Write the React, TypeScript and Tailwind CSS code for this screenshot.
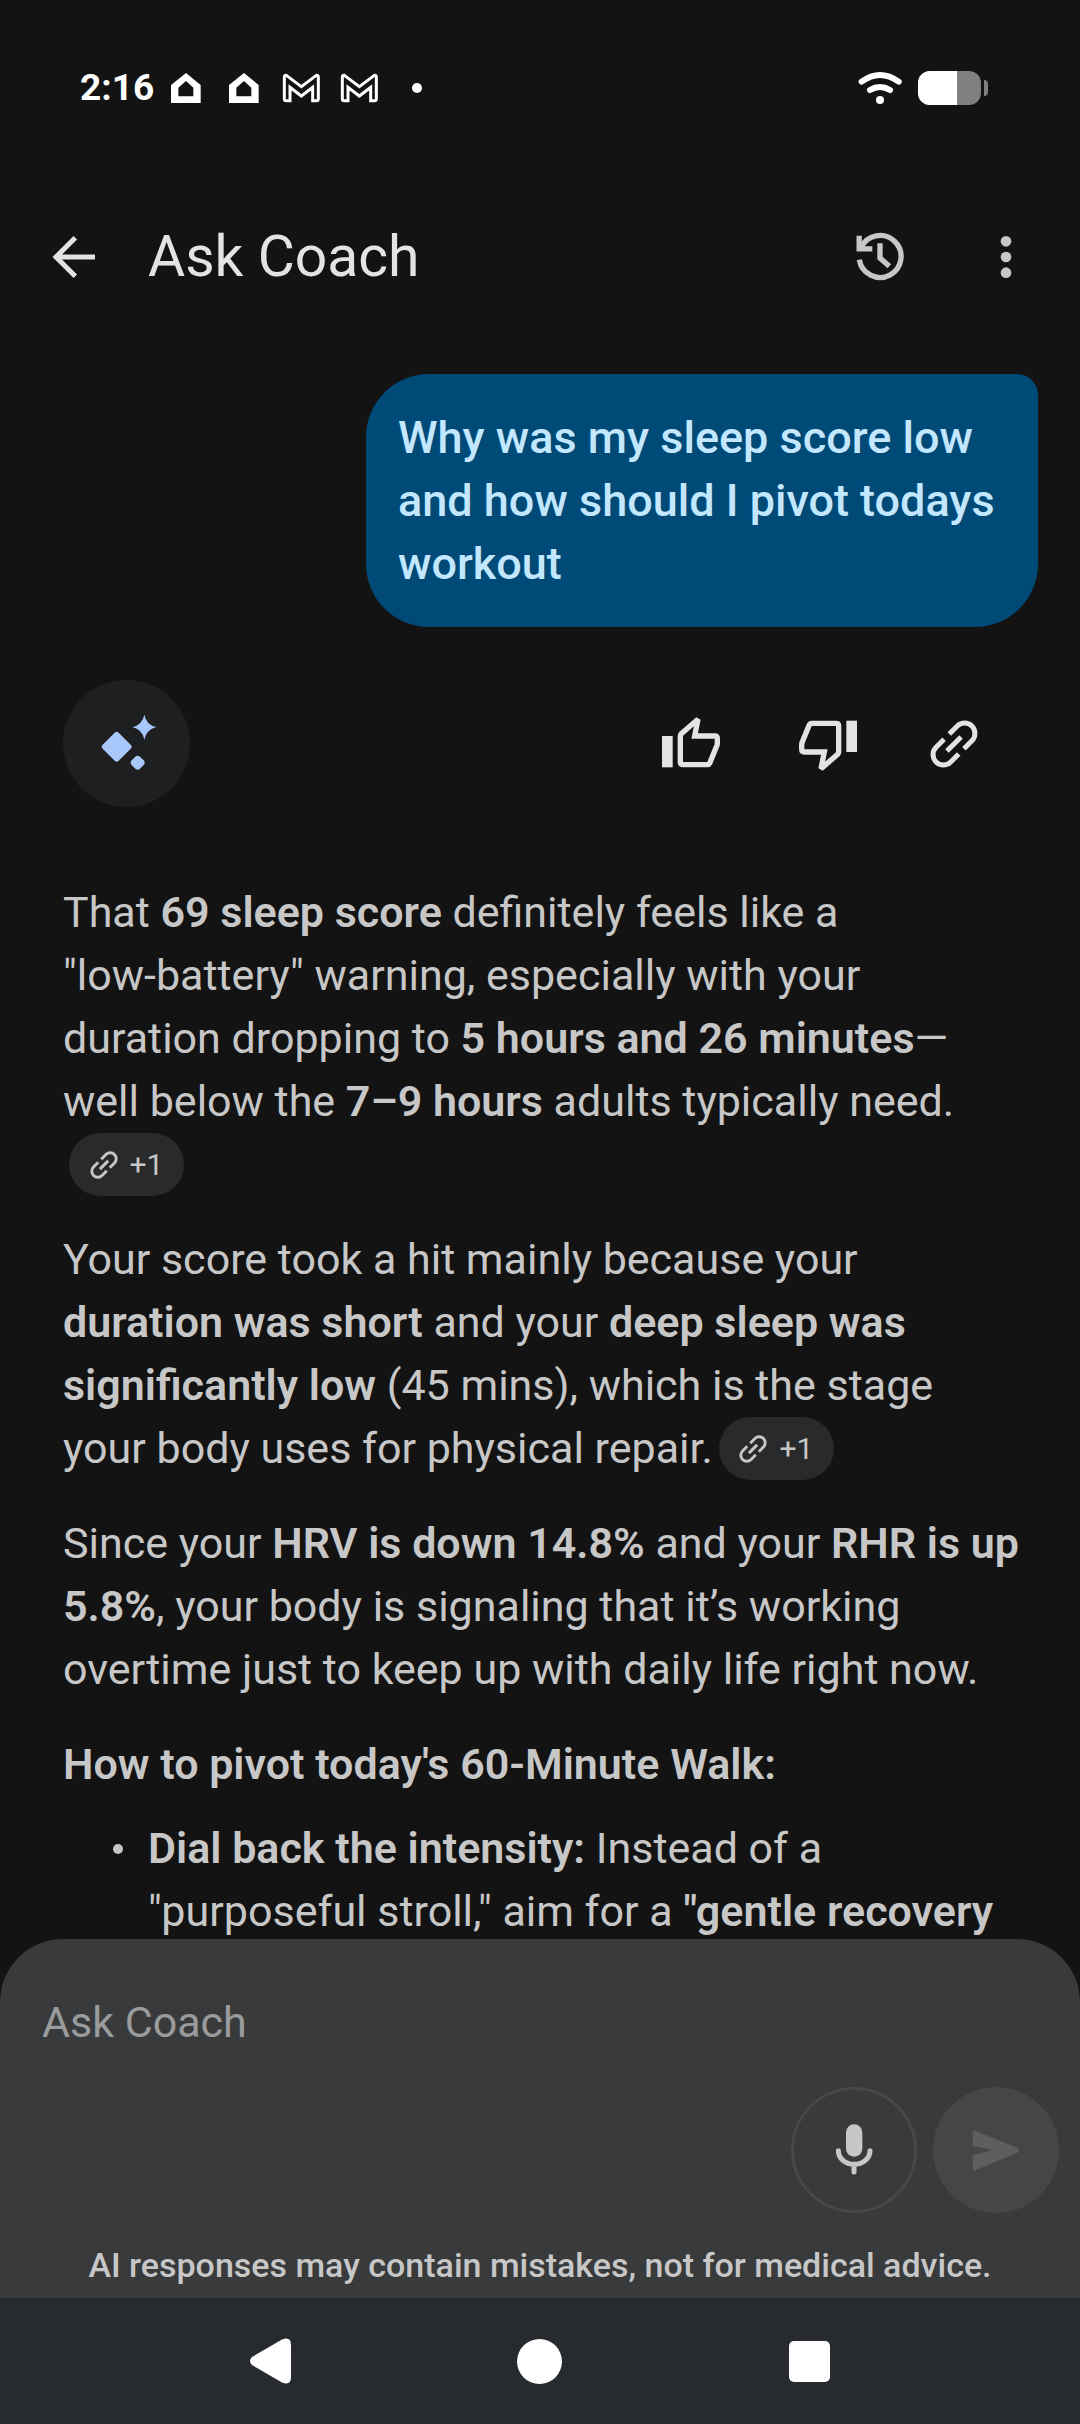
import { useState } from 'react'
import type { ReactNode } from 'react'

function HomeIcon() {
  return (
    <svg viewBox="387 62 96 96" className="h-8 w-8" fill="#fff" aria-hidden="true">
      <path fillRule="evenodd" d="M435 65L479 101V155H390V101ZM435 89L412 109V135H457V109Z" />
    </svg>
  )
}

function MailIcon() {
  return (
    <svg viewBox="725 60 114 108" className="h-9 w-[38px]" fill="none" stroke="#fff" strokeWidth="9" aria-hidden="true">
      <path d="M732 81Q732 75 738 76L783 110L828 76Q834 75 834 81V146Q834 152 828 152H817V112L783 138L749 112V152H738Q732 152 732 146Z" />
    </svg>
  )
}

function WifiIcon() {
  return (
    <svg viewBox="115 60 135 108" className="h-9 w-[45px]" fill="none" stroke="#fff" strokeWidth="18" strokeLinecap="round" aria-hidden="true">
      <path d="M126 95Q181 55 237 95M151 120Q181 102 211 120" />
      <circle cx="181" cy="150" r="12" fill="#fff" stroke="none" />
    </svg>
  )
}

function BackIcon() {
  return (
    <svg viewBox="39 77 192 192" className="h-16 w-16" fill="none" stroke="currentColor" strokeWidth="15" aria-hidden="true">
      <path d="M198 173H84M139 115L81 173L139 231" />
    </svg>
  )
}

function HistoryIcon() {
  return (
    <svg viewBox="85 47 192 192" className="h-16 w-16" fill="none" stroke="currentColor" strokeWidth="16" aria-hidden="true">
      <path d="M119 151A63 63 0 1 0 124 115M118.500 79V118.500H158M181 102V146L209 171" />
    </svg>
  )
}

function MoreIcon() {
  return (
    <svg viewBox="463 46 192 192" className="h-16 w-16" fill="currentColor" aria-hidden="true">
      <circle cx="559" cy="95" r="16" />
      <circle cx="559" cy="142" r="16" />
      <circle cx="559" cy="189" r="16" />
    </svg>
  )
}

function ThumbIcon({ down = false }: { down?: boolean }) {
  return (
    <svg viewBox="58 65 192 192" className={down ? 'h-16 w-16 rotate-180' : 'h-16 w-16'} aria-hidden="true">
      <rect x="67" y="137" width="32" height="94" fill="currentColor" />
      <path
        d="M130 223H204Q208 223 210 219L232 165Q233 162 233 159V145Q233 137 225 137H165L175 87L125 130Q122 133 122 137V216Q122 223 130 223Z"
        fill="none"
        stroke="currentColor"
        strokeWidth="16"
        strokeMiterlimit="2"
      />
    </svg>
  )
}

function LinkIcon({ className }: { className: string }) {
  return (
    <svg viewBox="-72 -72 144 144" className={className} fill="none" stroke="currentColor" strokeWidth="15" aria-hidden="true">
      <path
        transform="rotate(-45)"
        d="M11 -31H45A31 31 0 0 1 45 31H11M-11 -31H-45A31 31 0 0 0 -45 31H-11M-30 0H30"
      />
    </svg>
  )
}

function CoachIcon() {
  return (
    <svg viewBox="133 121 192 192" className="h-16 w-16" fill="#a8c7fa" aria-hidden="true">
      <path d="M192 183Q198 177 204 183L240 219Q246 225 240 231L204 267Q198 273 192 267L156 231Q150 225 156 219Z" />
      <path d="M281 129Q287 160 317 166Q287 173 281 204Q275 173 245 166Q275 160 281 129Z" />
      <path d="M254 255Q261 249 268 255L279 266Q285 273 279 280L268 291Q261 297 254 291L243 280Q237 273 243 266Z" />
    </svg>
  )
}

function MicIcon() {
  return (
    <svg viewBox="187 173 192 192" className="h-16 w-16" aria-hidden="true">
      <rect x="259" y="192" width="49" height="97" rx="24" fill="currentColor" />
      <path d="M236 271A47.500 41 0 0 0 331 271M283 314V335" fill="none" stroke="currentColor" strokeWidth="15" strokeLinecap="round" />
    </svg>
  )
}

function SendIcon() {
  return (
    <svg viewBox="612 174 192 192" className="h-16 w-16" fill="currentColor" aria-hidden="true">
      <path d="M638 219Q638 210 647 213L771 263Q782 270 771 279L647 330Q638 333 638 324V286L699 270L638 257Z" />
    </svg>
  )
}

function IconButton({ label, children }: { label: string; children: ReactNode }) {
  return (
    <button type="button" aria-label={label} className="flex size-[126px] shrink-0 items-center justify-center">
      {children}
    </button>
  )
}

function SourceChip() {
  return (
    <button
      type="button"
      aria-label="Show 1 more source"
      className="ml-1.5 inline-flex h-[63px] w-[115px] items-center justify-center gap-3 rounded-full bg-[#282a2c] align-top text-[30px]"
    >
      <LinkIcon className="size-7" />
      +1
    </button>
  )
}

function StatusBar() {
  return (
    <div className="flex h-44 shrink-0 items-center justify-between pr-[92px] pl-20 text-white">
      <div className="flex items-center">
        <span className="text-[37px] font-bold">2:16</span>
        <div className="ml-4 flex items-center gap-[26px]">
          <HomeIcon />
          <HomeIcon />
        </div>
        <div className="ml-[22px] flex items-center gap-5">
          <MailIcon />
          <MailIcon />
        </div>
        <span className="ml-[34px] size-2.5 rounded-full bg-white" />
      </div>
      <div className="flex items-center">
        <WifiIcon />
        <div className="ml-[15px] flex h-[34px] w-[63px] overflow-hidden rounded-xl bg-[#808080]">
          <span className="w-[39px] bg-white" />
        </div>
        <span className="ml-[3px] h-4 w-1 rounded-r-sm bg-[#808080]" />
      </div>
    </div>
  )
}

function Answer() {
  return (
    <div className="mt-[74px] flex flex-col gap-8 pr-[58px] pl-[63px] [&_strong]:font-semibold">
      <p>
        That <strong>69 sleep score</strong> definitely feels like a{' '}
        <span className="whitespace-nowrap">"low-battery"</span> warning, especially with your duration dropping to{' '}
        <strong>5 hours and 26 minutes</strong>—well below the <strong>7–9 hours</strong> adults typically need.{' '}
        <SourceChip />
      </p>
      <p>
        Your score took a hit mainly because your <strong>duration was short</strong> and your{' '}
        <strong>deep sleep was significantly low</strong> (45 mins), which is the stage your body uses for physical
        repair.
        <SourceChip />
      </p>
      <p>
        Since your <strong>HRV is down 14.8%</strong> and your <strong>RHR is up 5.8%</strong>, your body is signaling
        that it’s working overtime just to keep up with daily life right now.
      </p>
      <div>
        <h2 className="font-semibold">How to pivot today's 60-Minute Walk:</h2>
        <ul className="mt-[21px]">
          <li className="flex">
            <span className="flex h-[63px] w-[85px] shrink-0 items-center pl-[50px]">
              <span className="size-2.5 rounded-full bg-current" />
            </span>
            <span>
              <strong>Dial back the intensity:</strong> Instead of a "purposeful stroll," aim for a{' '}
              <strong>"gentle recovery</strong>
            </span>
          </li>
        </ul>
      </div>
    </div>
  )
}

export default function App() {
  const [message, setMessage] = useState('')

  return (
    <div className="flex h-screen flex-col bg-[#131313] font-[Roboto,sans-serif] text-[#c7c7c7]">
      <StatusBar />

      <header className="flex h-[162px] shrink-0 items-center px-[11px]">
        <div className="text-[#e3e3e3]">
          <IconButton label="Back">
            <BackIcon />
          </IconButton>
        </div>
        <h1 className="ml-[11px] flex-1 text-[57px] text-[#e3e3e3]">Ask Coach</h1>
        <IconButton label="History">
          <HistoryIcon />
        </IconButton>
        <IconButton label="More options">
          <MoreIcon />
        </IconButton>
      </header>

      <main className="min-h-0 flex-1 overflow-hidden pt-9 text-[43px] leading-[63px]">
        <div className="mr-[42px] ml-auto w-fit max-w-[672px] rounded-[63px] rounded-tr-[21px] bg-[#004a77] p-8 text-[45px] font-medium text-[#c2e7ff]">
          Why was my sleep score low and how should I pivot todays workout
        </div>

        <div className="mt-[53px] flex items-center justify-between px-[63px]">
          <span className="flex size-[127px] items-center justify-center rounded-full bg-[#1e1f20]">
            <CoachIcon />
          </span>
          <div className="flex items-center text-[#e3e3e3]">
            <div className="flex gap-[11px]">
              <IconButton label="Good response">
                <ThumbIcon />
              </IconButton>
              <IconButton label="Bad response">
                <ThumbIcon down />
              </IconButton>
            </div>
            <IconButton label="Sources">
              <LinkIcon className="size-12" />
            </IconButton>
          </div>
        </div>

        <Answer />
      </main>

      <form className="shrink-0 rounded-t-[63px] bg-[#393a3b] pt-[52px]" onSubmit={(e) => e.preventDefault()}>
        <input
          type="text"
          aria-label="Ask Coach"
          placeholder="Ask Coach"
          value={message}
          onChange={(e) => setMessage(e.target.value)}
          className="block h-[63px] w-full bg-transparent px-[42px] text-[43px] outline-none placeholder:text-[#9a9b9c]"
        />
        <div className="mt-[33px] flex justify-end gap-4 pr-[21px]">
          <button
            type="button"
            aria-label="Voice input"
            className="flex size-[126px] items-center justify-center rounded-full border-3 border-[#474847]"
          >
            <MicIcon />
          </button>
          <button
            type="submit"
            aria-label="Send"
            className="flex size-[126px] items-center justify-center rounded-full bg-[#454745] text-[#5d5f5e]"
          >
            <SendIcon />
          </button>
        </div>
        <p className="mt-8 pb-[13px] text-center text-[34px] leading-10 font-medium">
          AI responses may contain mistakes, not for medical advice.
        </p>
      </form>

      <nav className="flex h-[126px] shrink-0 items-center justify-around bg-[#272a2f] px-[137px]">
        <button type="button" aria-label="System back" className="p-2">
          <svg viewBox="0 0 41 46" className="h-[46px] w-[41px]" fill="#fff" aria-hidden="true">
            <path d="M2 19L32 1.500Q41 -2 41 7V39Q41 48 32 44.500L2 27Q-2 23 2 19Z" />
          </svg>
        </button>
        <button type="button" aria-label="System home" className="p-2">
          <span className="block size-[45px] rounded-full bg-white" />
        </button>
        <button type="button" aria-label="Recent apps" className="p-2">
          <span className="block size-[41px] rounded-[5px] bg-white" />
        </button>
      </nav>
    </div>
  )
}
